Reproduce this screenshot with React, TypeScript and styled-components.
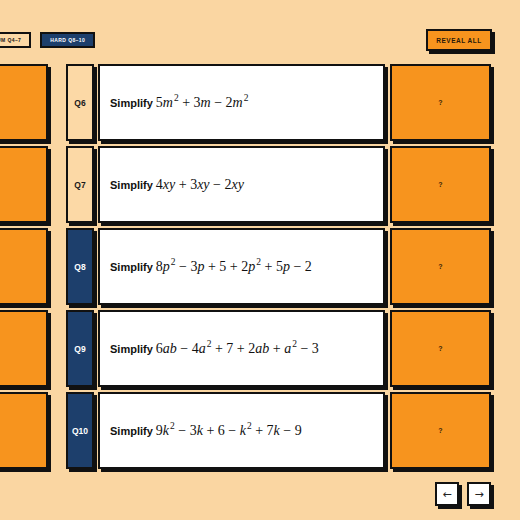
import React from "react";
import styled, { createGlobalStyle } from "styled-components";

const Global = createGlobalStyle`
  html, body {
    margin: 0;
    padding: 0;
    background: #fad6a2;
    overflow: hidden;
  }
  body {
    font-family: "Liberation Sans", Arial, sans-serif;
    width: 520px;
    height: 520px;
  }
`;

const Page = styled.div`
  width: 520px;
  height: 520px;
  background: #fad6a2;
  overflow: hidden;
`;

const TopBar = styled.div`
  display: flex;
  align-items: center;
  justify-content: space-between;
  height: 22px;
  margin-top: 29px;
  padding-right: 28px;
`;

const Filters = styled.div`
  display: flex;
  align-items: center;
  gap: 9px;
  margin-left: -27px;
`;

const Pill = styled.div<{ $active?: boolean }>`
  display: flex;
  align-items: center;
  height: 16px;
  box-sizing: border-box;
  padding: 0 8px;
  border: 2px solid #111;
  background: ${(p) => (p.$active ? "#1d3f6c" : "#fcd9a6")};
  color: ${(p) => (p.$active ? "#ffffff" : "#1a1a1a")};
  font-size: 5px;
  font-weight: 700;
  letter-spacing: 0.4px;
  white-space: nowrap;
`;

const RevealButton = styled.button`
  height: 22px;
  width: 66px;
  padding: 0;
  box-sizing: border-box;
  border: 2px solid #111;
  background: #f7941e;
  box-shadow: 3px 3px 0 #111;
  color: #2a1a08;
  font-family: "Liberation Sans", Arial, sans-serif;
  font-size: 6.5px;
  font-weight: 700;
  letter-spacing: 0.5px;
`;

const Rows = styled.div`
  display: flex;
  flex-direction: column;
  gap: 5px;
  margin-top: 13px;
`;

const Row = styled.div`
  display: flex;
  height: 77px;
  margin-left: -4px;
`;

const Card = styled.div`
  box-sizing: border-box;
  border: 2px solid #111;
  box-shadow: 3px 3px 0 #111;
`;

const PrevAnswer = styled(Card)`
  width: 52px;
  background: #f7941e;
  margin-right: 18px;
`;

const Label = styled(Card)<{ $hard?: boolean }>`
  width: 28px;
  margin-right: 4px;
  display: flex;
  align-items: center;
  justify-content: center;
  background: ${(p) => (p.$hard ? "#1d3f6c" : "#fcd9a6")};
  color: ${(p) => (p.$hard ? "#ffffff" : "#1a1a1a")};
  font-size: 8.5px;
  font-weight: 700;
`;

const Question = styled(Card)`
  width: 287px;
  margin-right: 5px;
  background: #ffffff;
  display: flex;
  align-items: center;
  padding-left: 10px;
  color: #111;
`;

const Lead = styled.span`
  font-size: 11px;
  font-weight: 700;
  margin-right: 3px;
`;

const Expr = styled.span`
  font-family: "Liberation Serif", "Times New Roman", serif;
  font-size: 14px;
  white-space: nowrap;
`;

const Var = styled.span`
  font-style: italic;
`;

const Sup = styled.sup`
  font-size: 9.5px;
  vertical-align: 0;
  position: relative;
  top: -6px;
  margin-left: 1px;
`;

const Op = styled.span`
  margin: 0 3.5px;
`;

const Answer = styled(Card)`
  width: 101px;
  background: #f7941e;
  display: flex;
  align-items: center;
  justify-content: center;
  color: #3a2408;
  font-size: 7px;
  font-weight: 700;
`;

const Nav = styled.div`
  display: flex;
  justify-content: flex-end;
  gap: 8px;
  margin-top: 13px;
  padding-right: 29px;
`;

const NavButton = styled.button`
  width: 24px;
  height: 24px;
  padding: 0;
  box-sizing: border-box;
  border: 2px solid #111;
  background: #ffffff;
  box-shadow: 3px 3px 0 #111;
  color: #222;
  font-family: "DejaVu Sans", sans-serif;
  font-size: 11px;
  line-height: 1;
`;

function MathExpr({ src }: { src: string }) {
  const parts: React.ReactNode[] = [];
  let i = 0;
  let k = 0;
  while (i < src.length) {
    const c = src[i];
    if (c === " ") {
      i++;
      continue;
    }
    if (c === "^") {
      parts.push(<Sup key={k++}>{src[i + 1]}</Sup>);
      i += 2;
      continue;
    }
    if (c === "+" || c === "-") {
      parts.push(<Op key={k++}>{c === "-" ? "\u2212" : "+"}</Op>);
      i++;
      continue;
    }
    if (/[a-z]/.test(c)) {
      parts.push(<Var key={k++}>{c}</Var>);
      i++;
      continue;
    }
    parts.push(<span key={k++}>{c}</span>);
    i++;
  }
  return <Expr>{parts}</Expr>;
}

const questions = [
  { id: "Q6", hard: false, expr: "5m^2 + 3m - 2m^2" },
  { id: "Q7", hard: false, expr: "4xy + 3xy - 2xy" },
  { id: "Q8", hard: true, expr: "8p^2 - 3p + 5 + 2p^2 + 5p - 2" },
  { id: "Q9", hard: true, expr: "6ab - 4a^2 + 7 + 2ab + a^2 - 3" },
  { id: "Q10", hard: true, expr: "9k^2 - 3k + 6 - k^2 + 7k - 9" },
];

export default function App() {
  return (
    <Page>
      <Global />
      <TopBar>
        <Filters>
          <Pill>MEDIUM Q4–7</Pill>
          <Pill $active>HARD Q8–10</Pill>
        </Filters>
        <RevealButton>REVEAL ALL</RevealButton>
      </TopBar>
      <Rows>
        {questions.map((q) => (
          <Row key={q.id}>
            <PrevAnswer />
            <Label $hard={q.hard}>{q.id}</Label>
            <Question>
              <Lead>Simplify</Lead>
              <MathExpr src={q.expr} />
            </Question>
            <Answer>?</Answer>
          </Row>
        ))}
      </Rows>
      <Nav>
        <NavButton>←</NavButton>
        <NavButton>→</NavButton>
      </Nav>
    </Page>
  );
}
